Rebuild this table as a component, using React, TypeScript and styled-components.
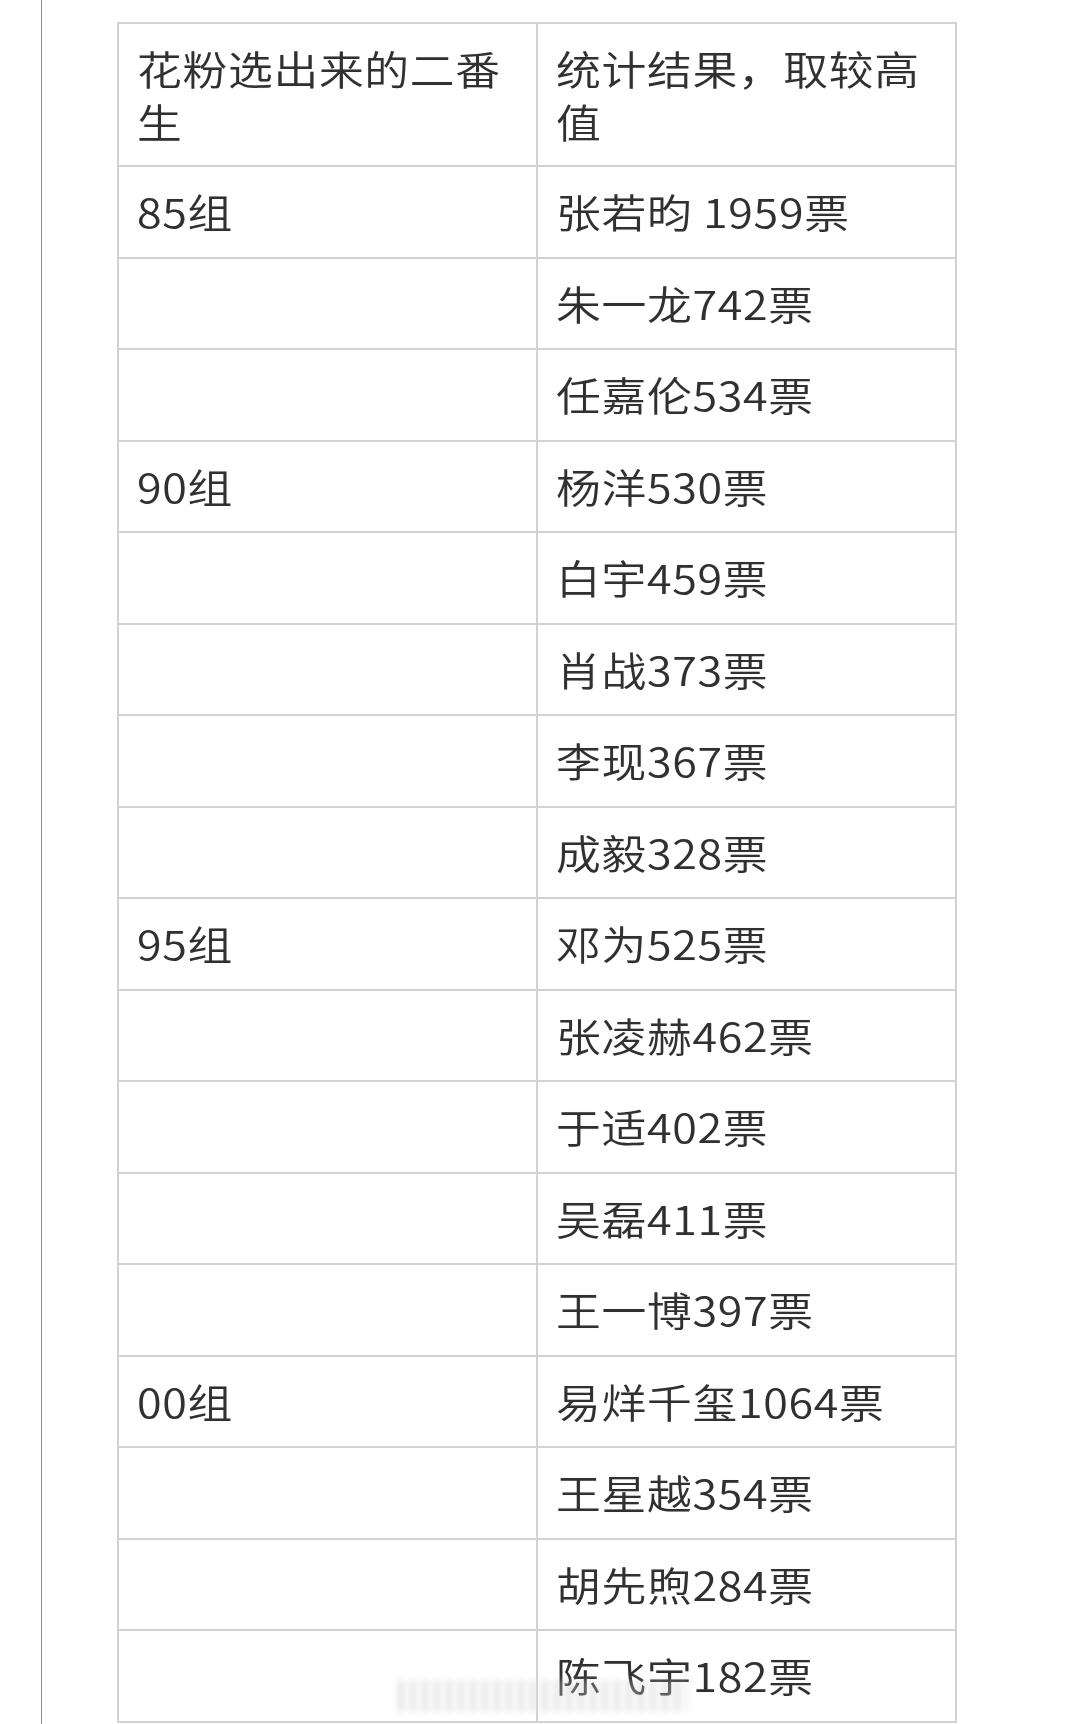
import React from "react";
import styled, { createGlobalStyle } from "styled-components";

const GlobalStyle = createGlobalStyle`
  html, body {
    margin: 0;
    padding: 0;
    background: #ffffff;
  }
  body {
    font-family: "Noto Sans CJK SC", "Noto Sans", sans-serif;
    color: #333333;
  }
`;

const Page = styled.div`
  position: relative;
  min-height: 1724px;
  box-sizing: border-box;
  margin-left: 41px;
  border-left: 1px solid #8c8c8c;
  padding: 22px 0 0 75px;
  background: #ffffff;
`;

const Table = styled.table`
  width: 840px;
  border-collapse: collapse;
  table-layout: fixed;
  border: 2px solid #cdcdcd;
`;

const Row = styled.tr<{ $header?: boolean }>`
  height: ${(p) => (p.$header ? "143px" : "91.5px")};
`;

const Cell = styled.td`
  width: 50%;
  border: 2px solid #d2d2d2;
  padding: 0 18px;
  vertical-align: middle;
  font-size: 40px;
  line-height: 53px;
  color: #303030;
  font-weight: 350;
`;

const Text = styled.span<{ $wrap?: number }>`
  display: inline-block;
  transform: scaleX(1.12);
  transform-origin: left center;
  letter-spacing: 0.6px;
  white-space: ${(p) => (p.$wrap ? "normal" : "nowrap")};
  max-width: ${(p) => (p.$wrap ? `${p.$wrap}px` : "none")};
  text-shadow: 0 0 1px rgba(0, 0, 0, 0.18);
`;

const Watermark = styled.div`
  position: absolute;
  left: 356px;
  top: 1680px;
  width: 290px;
  height: 32px;
  background: repeating-linear-gradient(
    90deg,
    rgba(150, 150, 150, 0.35) 0px,
    rgba(150, 150, 150, 0.35) 6px,
    rgba(255, 255, 255, 0.5) 6px,
    rgba(255, 255, 255, 0.5) 12px
  );
  filter: blur(3px);
  opacity: 0.7;
  pointer-events: none;
`;

const rows: [string, string][] = [
  ["85组", "张若昀 1959票"],
  ["", "朱一龙742票"],
  ["", "任嘉伦534票"],
  ["90组", "杨洋530票"],
  ["", "白宇459票"],
  ["", "肖战373票"],
  ["", "李现367票"],
  ["", "成毅328票"],
  ["95组", "邓为525票"],
  ["", "张凌赫462票"],
  ["", "于适402票"],
  ["", "吴磊411票"],
  ["", "王一博397票"],
  ["00组", "易烊千玺1064票"],
  ["", "王星越354票"],
  ["", "胡先煦284票"],
  ["", "陈飞宇182票"],
];

export default function App() {
  return (
    <>
      <GlobalStyle />
      <Page>
        <Table>
          <tbody>
            <Row $header>
              <Cell>
                <Text $wrap={330}>花粉选出来的二番生</Text>
              </Cell>
              <Cell>
                <Text $wrap={330}>统计结果，取较高值</Text>
              </Cell>
            </Row>
            {rows.map(([group, result], i) => (
              <Row key={i}>
                <Cell>{group && <Text>{group}</Text>}</Cell>
                <Cell>
                  <Text>{result}</Text>
                </Cell>
              </Row>
            ))}
          </tbody>
        </Table>
        <Watermark />
      </Page>
    </>
  );
}
